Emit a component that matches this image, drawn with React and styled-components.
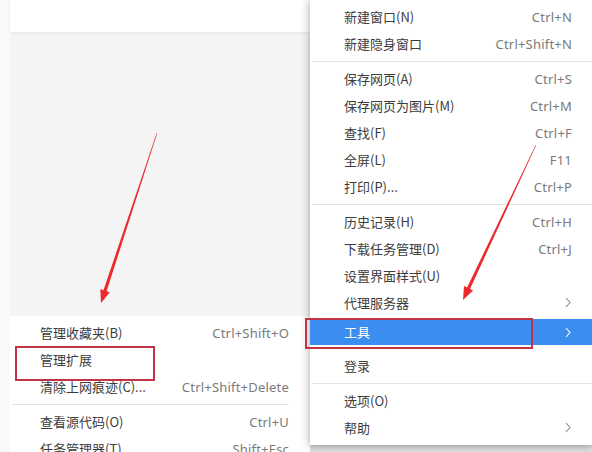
import React from "react";
import styled, { createGlobalStyle } from "styled-components";

const Global = createGlobalStyle`
  html, body { margin: 0; padding: 0; background: #f9f9f9; }
  body { font-family: "Noto Sans CJK SC", "Noto Sans", sans-serif; }
`;

const Page = styled.div`
  position: relative;
  width: 592px;
  height: 452px;
  overflow: hidden;
  background: #f9f9f9;
  display: flex;
  align-items: flex-start;
`;

const LeftPane = styled.div`
  margin-left: 10px;
  width: 300px;
  height: 452px;
  display: flex;
  flex-direction: column;
  flex-shrink: 0;
`;

const TopBar = styled.div`
  height: 32px;
  background: #ffffff;
  box-shadow: 0 1px 3px rgba(0, 0, 0, 0.06);
  position: relative;
  z-index: 1;
`;

const Canvas = styled.div`
  flex: 1;
  background: #f4f4f4;
`;

const SubMenu = styled.div`
  height: 136px;
  flex-shrink: 0;
  background: #ffffff;
  padding: 3px 21px 0 0;
  box-sizing: border-box;
  display: flex;
  flex-direction: column;
`;

const RightColumn = styled.div`
  width: 282px;
  height: 452px;
  flex-shrink: 0;
  background: #dcdcdc;
  position: relative;
  z-index: 2;
`;

const MainMenu = styled.div`
  height: 445px;
  background: #ffffff;
  box-shadow: -3px 0 8px rgba(0, 0, 0, 0.14), 0 2px 5px rgba(0, 0, 0, 0.18);
  padding: 3px 0 0 0;
  box-sizing: border-box;
  display: flex;
  flex-direction: column;
`;

const Row = styled.div`
  height: ${(p) => p.$h || 27}px;
  margin-top: ${(p) => p.$mt || 0}px;
  margin-bottom: ${(p) => p.$mb || 0}px;
  flex-shrink: 0;
  display: flex;
  align-items: center;
  justify-content: space-between;
  padding: 0 ${(p) => p.$pr}px 0 ${(p) => p.$pl}px;
  background: ${(p) => (p.$active ? "#3b8df0" : "transparent")};
  color: ${(p) => (p.$active ? "#ffffff" : "#3c3c3c")};
  font-size: 13px;
  line-height: 16px;
  white-space: nowrap;
`;

const Label = styled.span``;

const Shortcut = styled.span`
  color: ${(p) => (p.$active ? "#ffffff" : "#7a7a7a")};
  font-family: "Noto Sans", "Noto Sans CJK SC", sans-serif;
  font-size: 13px;
  letter-spacing: 0.2px;
`;

const Separator = styled.div`
  height: 8px;
  flex-shrink: 0;
  display: flex;
  align-items: center;
  padding-left: ${(p) => p.$pl || 0}px;
  &::after {
    content: "";
    flex: 1;
    height: 1px;
    background: #e4e4e4;
  }
`;

const Chevron = ({ color }) => (
  <svg width="8" height="11" viewBox="0 0 8 11">
    <polyline points="2,1 6,5.5 2,10" fill="none" stroke={color} strokeWidth="1.1" />
  </svg>
);

const Overlay = styled.svg`
  position: absolute;
  left: 0;
  top: 0;
  width: 592px;
  height: 452px;
  pointer-events: none;
  z-index: 5;
`;

const HighlightBox = styled.div`
  position: absolute;
  left: ${(p) => p.$x}px;
  top: ${(p) => p.$y}px;
  width: ${(p) => p.$w}px;
  height: ${(p) => p.$h}px;
  border: 2px solid #c13344;
  box-sizing: border-box;
  z-index: 4;
  pointer-events: none;
`;

function arrowPoints(x1, y1, x2, y2, w0, w1, headLen, headHalf) {
  const dx = x2 - x1;
  const dy = y2 - y1;
  const len = Math.hypot(dx, dy);
  const ux = dx / len;
  const uy = dy / len;
  const nx = -uy;
  const ny = ux;
  const bx = x2 - ux * headLen;
  const by = y2 - uy * headLen;
  const pts = [
    [x1 + nx * w0, y1 + ny * w0],
    [bx + nx * w1, by + ny * w1],
    [bx + nx * headHalf, by + ny * headHalf],
    [x2, y2],
    [bx - nx * headHalf, by - ny * headHalf],
    [bx - nx * w1, by - ny * w1],
    [x1 - nx * w0, y1 - ny * w0],
  ];
  return pts.map((p) => p.map((v) => v.toFixed(1)).join(",")).join(" ");
}

const mainItems = [
  { t: "新建窗口(N)", s: "Ctrl+N" },
  { t: "新建隐身窗口", s: "Ctrl+Shift+N" },
  { sep: true },
  { t: "保存网页(A)", s: "Ctrl+S" },
  { t: "保存网页为图片(M)", s: "Ctrl+M" },
  { t: "查找(F)", s: "Ctrl+F" },
  { t: "全屏(L)", s: "F11" },
  { t: "打印(P)...", s: "Ctrl+P" },
  { sep: true },
  { t: "历史记录(H)", s: "Ctrl+H" },
  { t: "下载任务管理(D)", s: "Ctrl+J" },
  { t: "设置界面样式(U)" },
  { t: "代理服务器", sub: true },
  { t: "工具", sub: true, active: true, h: 26, mt: 3, mb: 7 },
  { t: "登录" },
  { sep: true },
  { t: "选项(O)" },
  { t: "帮助", sub: true },
];

const subItems = [
  { t: "管理收藏夹(B)", s: "Ctrl+Shift+O" },
  { t: "管理扩展" },
  { t: "清除上网痕迹(C)...", s: "Ctrl+Shift+Delete" },
  { sep: true },
  { t: "查看源代码(O)", s: "Ctrl+U" },
  { t: "任务管理器(T)", s: "Shift+Esc" },
];

function renderItems(items, pl, pr, sepPl) {
  return items.map((it, i) =>
    it.sep ? (
      <Separator key={i} $pl={sepPl} />
    ) : (
      <Row key={i} $pl={pl} $pr={pr} $active={it.active} $h={it.h} $mt={it.mt} $mb={it.mb}>
        <Label>{it.t}</Label>
        {it.s ? <Shortcut $active={it.active}>{it.s}</Shortcut> : null}
        {it.sub ? <Chevron color={it.active ? "#ffffff" : "#888888"} /> : null}
      </Row>
    )
  );
}

export default function App() {
  return (
    <>
      <Global />
      <Page>
        <LeftPane>
          <TopBar />
          <Canvas />
          <SubMenu>{renderItems(subItems, 30, 0, 2)}</SubMenu>
        </LeftPane>
        <RightColumn>
          <MainMenu>{renderItems(mainItems, 34, 20, 2)}</MainMenu>
        </RightColumn>
        <HighlightBox $x={15} $y={346} $w={140} $h={35} />
        <HighlightBox $x={305} $y={318} $w={228} $h={31} />
        <Overlay viewBox="0 0 592 452">
          <polygon points={arrowPoints(157, 133, 101, 303, 0.3, 1.6, 13, 5)} fill="#ec2a2d" />
          <polygon points={arrowPoints(536, 145, 463, 300, 0.3, 1.6, 13, 5)} fill="#ec2a2d" />
        </Overlay>
      </Page>
    </>
  );
}
